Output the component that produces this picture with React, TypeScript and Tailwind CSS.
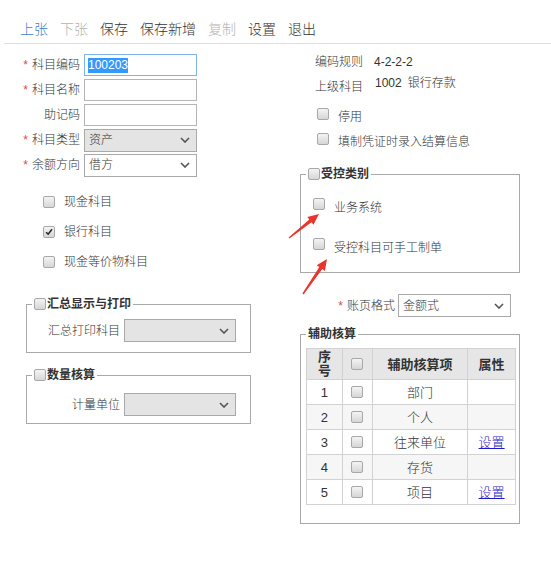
import React from 'react';

type Pt = [number, number];

// tapered red annotation arrow, tail -> head
function arrowPoints(x1: number, y1: number, x2: number, y2: number) {
  const dx = x2 - x1;
  const dy = y2 - y1;
  const len = Math.hypot(dx, dy);
  const ux = dx / len;
  const uy = dy / len;
  const px = -uy;
  const py = ux;
  const hl = 11;
  const hw = 5;
  const bx = x2 - ux * hl;
  const by = y2 - uy * hl;
  const pts: Pt[] = [
    [x1 + px * 0.7, y1 + py * 0.7],
    [bx + px * 1.8, by + py * 1.8],
    [bx + px * hw, by + py * hw],
    [x2, y2],
    [bx - px * hw, by - py * hw],
    [bx - px * 1.8, by - py * 1.8],
    [x1 - px * 0.7, y1 - py * 0.7],
  ];
  return pts.map((p) => p.map((n) => n.toFixed(1)).join(',')).join(' ');
}

function Checkbox({ checked = false }: { checked?: boolean }) {
  return (
    <span className="relative inline-flex h-[12px] w-[12px] shrink-0 items-center justify-center rounded-[2px] border border-[#a8a8a8] bg-linear-to-b from-[#f4f4f4] to-[#d6d6d6]">
      {checked && (
        <svg viewBox="0 0 12 12" className="h-[10px] w-[10px]">
          <path d="M2.5 6.2 L5 8.6 L9.6 2.8" fill="none" stroke="#222" strokeWidth="1.8" />
        </svg>
      )}
    </span>
  );
}

function Chevron() {
  return (
    <svg viewBox="0 0 10 6" className="h-[6px] w-[10px]">
      <path d="M1 1 L5 5 L9 1" fill="none" stroke="#555" strokeWidth="1.6" />
    </svg>
  );
}

function Select({ value, disabled = false, width = 'w-[113px]' }: { value?: string; disabled?: boolean; width?: string }) {
  return (
    <div
      className={`flex h-[23px] items-center justify-between border border-[#a9a9a9] pl-[4px] pr-[6px] ${width} ${
        disabled ? 'bg-[#e4e4e4]' : 'bg-white'
      }`}
    >
      <span>{value}</span>
      <Chevron />
    </div>
  );
}

function FormRow({ label, required, children }: { label: string; required?: boolean; children: React.ReactNode }) {
  return (
    <div className="flex h-[22px] items-center">
      <div className="w-[84px] pr-[4px] text-right">
        {required && <span className="mr-[4px] text-[#e0484b]">*</span>}
        {label}
      </div>
      {children}
    </div>
  );
}

const rows = [
  { no: 1, name: '部门', link: false },
  { no: 2, name: '个人', link: false },
  { no: 3, name: '往来单位', link: true },
  { no: 4, name: '存货', link: false },
  { no: 5, name: '项目', link: true },
];

export default function App() {
  return (
    <div className="relative h-[568px] w-[551px] overflow-hidden bg-white font-['Liberation_Sans','Noto_Sans_CJK_SC',sans-serif] text-[12px] font-light leading-[18px] text-[#333]">
      {/* toolbar */}
      <div className="ml-[4px] flex h-[44px] items-end gap-[12px] border-b border-[#dedede] pb-[4px] pl-[16px] text-[14px] leading-[20px]">
        <span className="text-[#3f7fc4]">上张</span>
        <span className="text-[#b3b3b3]">下张</span>
        <span>保存</span>
        <span>保存新增</span>
        <span className="text-[#b3b3b3]">复制</span>
        <span>设置</span>
        <span>退出</span>
      </div>

      <div className="flex">
        {/* left column */}
        <div className="w-[300px] shrink-0 pt-[10px]">
          <div className="flex flex-col gap-[3px]">
            <FormRow label="科目编码" required>
              <div className="flex h-[22px] w-[113px] items-center border border-[#7eb4ea] bg-white pl-[3px]">
                <span className="bg-[#3399ff] leading-[15px] text-white">100203</span>
              </div>
            </FormRow>
            <FormRow label="科目名称" required>
              <div className="h-[22px] w-[113px] border border-[#b5b5b5] bg-white" />
            </FormRow>
            <FormRow label="助记码">
              <div className="h-[22px] w-[113px] border border-[#b5b5b5] bg-white" />
            </FormRow>
            <FormRow label="科目类型" required>
              <Select value="资产" disabled />
            </FormRow>
            <FormRow label="余额方向" required>
              <Select value="借方" />
            </FormRow>
          </div>

          <div className="mt-[16px] flex flex-col gap-[10px] pl-[43px]">
            <div className="flex h-[20px] items-center gap-[9px]">
              <Checkbox />
              <span>现金科目</span>
            </div>
            <div className="flex h-[20px] items-center gap-[9px]">
              <Checkbox checked />
              <span>银行科目</span>
            </div>
            <div className="flex h-[20px] items-center gap-[9px]">
              <Checkbox />
              <span>现金等价物科目</span>
            </div>
          </div>

          <fieldset className="ml-[26px] mt-[23px] w-[225px] border border-[#a9a9a9] pb-[10px] pt-[6px]">
            <legend className="ml-[5px] flex items-center gap-[1px] px-[2px] font-bold">
              <Checkbox />
              <span>汇总显示与打印</span>
            </legend>
            <div className="flex items-center">
              <div className="w-[97px] pr-[4px] text-right">汇总打印科目</div>
              <Select disabled width="w-[112px]" />
            </div>
          </fieldset>

          <fieldset className="ml-[26px] mt-[13px] w-[225px] border border-[#a9a9a9] pb-[7px] pt-[9px]">
            <legend className="ml-[5px] flex items-center gap-[1px] px-[2px] font-bold">
              <Checkbox />
              <span>数量核算</span>
            </legend>
            <div className="flex items-center">
              <div className="w-[97px] pr-[4px] text-right">计量单位</div>
              <Select disabled width="w-[112px]" />
            </div>
          </fieldset>
        </div>

        {/* right column */}
        <div className="w-[230px]">
          <div className="mt-[9px] flex pl-[15px]">
            <span className="w-[59px]">编码规则</span>
            <span>4-2-2-2</span>
          </div>
          <div className="mt-[3px] flex items-start pl-[15px]">
            <span className="mt-[4px] w-[60px]">上级科目</span>
            <span>1002</span>
            <span className="ml-[6px]">银行存款</span>
          </div>
          <div className="mt-[12px] flex items-start gap-[9px] pl-[17px]">
            <Checkbox />
            <span>停用</span>
          </div>
          <div className="mt-[7px] flex items-start gap-[9px] pl-[17px]">
            <Checkbox />
            <span>填制凭证时录入结算信息</span>
          </div>

          <fieldset className="mt-[14px] w-[220px] border border-[#a9a9a9] pb-[15px] pl-[12px] pt-[15px]">
            <legend className="ml-[-7px] flex items-center gap-[1px] px-[2px] font-bold">
              <Checkbox />
              <span>受控类别</span>
            </legend>
            <div className="flex flex-col gap-[21px]">
              <div className="flex items-start gap-[9px]">
                <Checkbox />
                <span className="mt-[1px]">业务系统</span>
              </div>
              <div className="flex items-start gap-[9px]">
                <Checkbox />
                <span className="mt-[1px]">受控科目可手工制单</span>
              </div>
            </div>
          </fieldset>

          <div className="mt-[21px] flex items-center">
            <div className="w-[98px] pr-[3px] text-right">
              <span className="mr-[4px] text-[#e0484b]">*</span>账页格式
            </div>
            <Select value="金额式" />
          </div>

          <fieldset className="mt-[8px] w-[220px] border border-[#a9a9a9] pb-[18px] pl-[5px] pt-[5px]">
            <legend className="ml-[0px] px-[2px] font-bold">辅助核算</legend>
            <table className="w-[210px] border-collapse text-[13px] leading-[15px]">
              <colgroup>
                <col className="w-[36px]" />
                <col className="w-[30px]" />
                <col className="w-[96px]" />
                <col className="w-[48px]" />
              </colgroup>
              <thead>
                <tr className="h-[31px] bg-[#e6e6e6]">
                  <th className="border border-[#d2d2d2] text-center font-bold leading-[14px]">
                    <div>序</div>
                    <div>号</div>
                  </th>
                  <th className="border border-[#d2d2d2]">
                    <div className="flex justify-center">
                      <Checkbox />
                    </div>
                  </th>
                  <th className="border border-[#d2d2d2] font-bold">辅助核算项</th>
                  <th className="border border-[#d2d2d2] font-bold">属性</th>
                </tr>
              </thead>
              <tbody>
                {rows.map((r) => (
                  <tr key={r.no} className={`h-[25px] ${r.no % 2 === 0 ? 'bg-[#f6f6f6]' : 'bg-white'}`}>
                    <td className="border border-[#d2d2d2] text-center">{r.no}</td>
                    <td className="border border-[#d2d2d2]">
                      <div className="flex justify-center">
                        <Checkbox />
                      </div>
                    </td>
                    <td className="border border-[#d2d2d2] text-center">{r.name}</td>
                    <td className="border border-[#d2d2d2] text-center">
                      {r.link && <span className="text-[#1a1acc] underline">设置</span>}
                    </td>
                  </tr>
                ))}
              </tbody>
            </table>
          </fieldset>
        </div>
      </div>

      {/* red annotation arrows */}
      <svg className="pointer-events-none absolute left-0 top-0" width="551" height="568">
        <polygon points={arrowPoints(289, 238, 319, 214)} fill="#e8352e" />
        <polygon points={arrowPoints(303, 294, 327, 259)} fill="#e8352e" />
      </svg>
    </div>
  );
}
